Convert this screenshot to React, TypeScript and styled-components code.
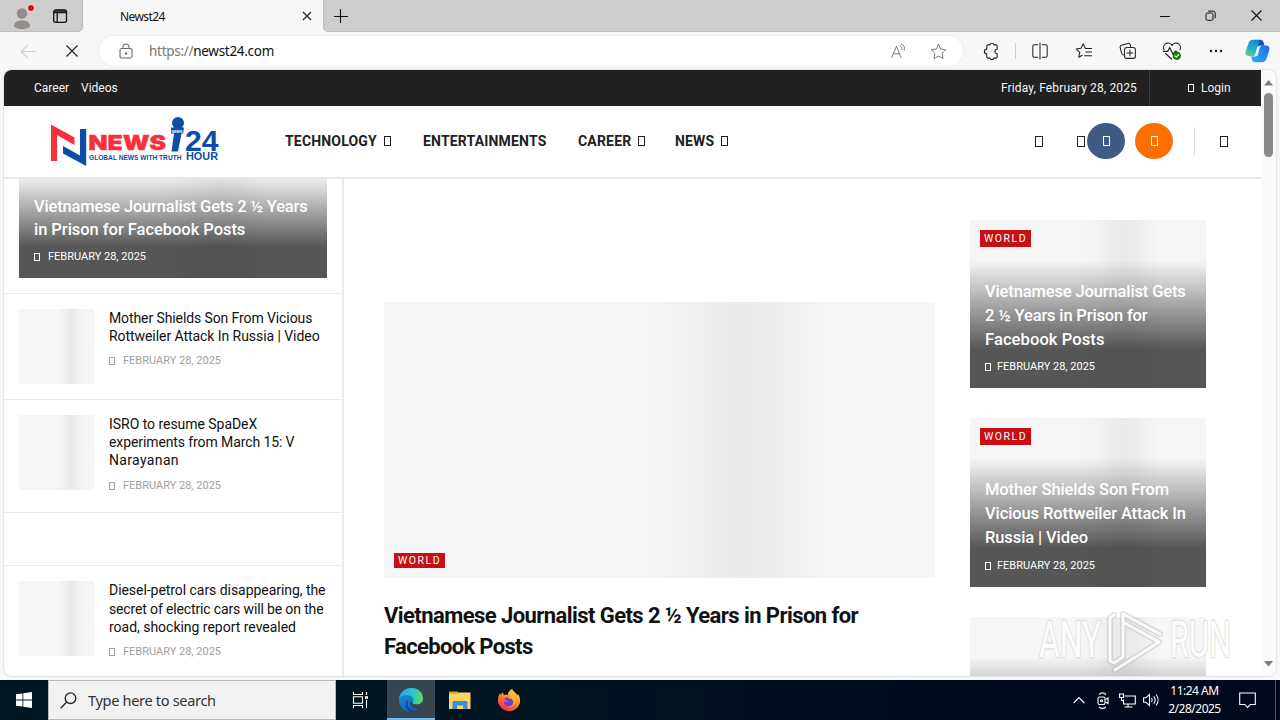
import type { ReactNode } from "react";
import styled, { createGlobalStyle } from "styled-components";

const posts = [
  {
    title: ["Mother Shields Son From Vicious", "Rottweiler Attack In Russia | Video"],
    spacing: [-0.1, -0.06],
  },
  {
    title: ["ISRO to resume SpaDeX", "experiments from March 15: V", "Narayanan"],
    spacing: [-0.04, -0.1, 0.35],
  },
];

const dieselPost = {
  title: [
    "Diesel-petrol cars disappearing, the",
    "secret of electric cars will be on the",
    "road, shocking report revealed",
  ],
  spacing: [-0.05, -0.14, -0.02],
};

const cards = [
  {
    title: ["Vietnamese Journalist Gets", "2 ½ Years in Prison for", "Facebook Posts"],
    spacing: [-0.13, -0.16, 0.1],
  },
  {
    title: ["Mother Shields Son From", "Vicious Rottweiler Attack In", "Russia | Video"],
    spacing: [-0.1, -0.1, -0.1],
  },
];

const menu = [
  { name: "TECHNOLOGY", width: 138, sub: true },
  { name: "ENTERTAINMENTS", width: 155, sub: false },
  { name: "CAREER", width: 97, sub: true },
  { name: "NEWS", width: 60, sub: true },
];

const Icon = ({ size = 20, children }: { size?: number; children: ReactNode }) => (
  <IconSvg
    width={size}
    height={size}
    viewBox="0 0 20 20"
    fill="none"
    stroke="currentColor"
    strokeWidth="1.15"
    strokeLinecap="round"
    strokeLinejoin="round"
  >
    {children}
  </IconSvg>
);

const TabBar = () => (
  <TabStrip>
    <TabActions>
      <svg width="28" height="28" viewBox="0 0 28 28">
        <circle cx="14" cy="14" r="12" fill="#d0cdcb" />
        <circle cx="14" cy="11.5" r="5.2" fill="#918f8d" />
        <path d="M6 24.5c0-4 3-6 8-6s8 2 8 6c-2 2-5 2.5-8 2.5s-6-.5-8-2.5z" fill="#918f8d" />
        <circle cx="23" cy="6" r="4.2" fill="#e6d8d8" />
        <circle cx="23" cy="6" r="3" fill="#e00b1c" />
      </svg>
      <svg width="16" height="16" viewBox="0 0 16 16" fill="none" stroke="#111" strokeWidth="1.3">
        <rect x="1.7" y="2" width="12.8" height="12.3" rx="2" />
        <path d="M2 3.2h12.3M2 4.6h12.3M5.2 5v9" />
      </svg>
    </TabActions>
    <ActiveTab>
      <span>Newst24</span>
      <svg width="10" height="10" viewBox="0 0 10 10" stroke="#222" strokeWidth="1.2">
        <path d="M1 1l8 8M9 1l-8 8" />
      </svg>
    </ActiveTab>
    <TabRest>
      <svg width="14" height="14" viewBox="0 0 14 14" stroke="#111" strokeWidth="1.1">
        <path d="M6.5 0v14M0 7.5h14" />
      </svg>
      <WindowButtons>
        <svg width="10" height="10" stroke="#111">
          <path d="M0 5.5h10" />
        </svg>
        <svg width="11" height="11" fill="none" stroke="#111">
          <rect x="1" y="3" width="7" height="7.3" rx="1.4" />
          <path d="M3 1.1h5.2a2 2 0 0 1 2 2v5.2" />
        </svg>
        <svg width="11" height="11" stroke="#111" strokeWidth="1.1">
          <path d="M.5.5l10 10M10.5.5l-10 10" />
        </svg>
      </WindowButtons>
    </TabRest>
  </TabStrip>
);

const AddressBar = () => (
  <Toolbar>
    <Slot $width={56} $color="#cfcfcf">
      <Icon size={19}>
        <path d="M17.5 10H2.5M9 3.5L2.5 10 9 16.5" />
      </Icon>
    </Slot>
    <Slot $width={32}>
      <svg width="12" height="12" stroke="#222" strokeWidth="1.2">
        <path d="M.5.5l11 11M11.5.5l-11 11" />
      </svg>
    </Slot>
    <AddressPill>
      <Slot $width={17} $color="#6b6b6b">
        <svg width="14" height="17" viewBox="0 0 14 17" fill="none" stroke="currentColor" strokeWidth="1.1">
          <rect x="1" y="5.5" width="12" height="9.5" rx="1.6" />
          <path d="M4 5.500V4a3 3 0 0 1 6 0v1.500" />
          <circle cx="7" cy="10.4" r=".7" fill="currentColor" />
        </svg>
      </Slot>
      <Url>
        <i>https://</i>newst24.com
      </Url>
      <Slot $width={40} $color="#777">
        <Icon size={17}>
          <path d="M2 17L7.6 4 13 17M4 12.7h7.2M12 3.4c1.6 1 2.2 2.6 2 4.4M13.3.8c3.2 1.6 4.3 4.6 3.6 7.6" />
        </Icon>
      </Slot>
      <Slot $width={40} $color="#777">
        <Icon size={17}>
          <path d="M10 1.5l2.6 5.6 6 .8-4.4 4.2 1.1 6.2L10 15.3l-5.3 3 1.1-6.2L1.4 7.9l6-.8z" />
        </Icon>
      </Slot>
    </AddressPill>
    <Slot $width={56}>
      <Icon size={19}>
        <path d="M7 3h1.3a2.2 2.2 0 0 1 4.3 0H14.5A1.5 1.5 0 0 1 16 4.5V7.6a2.4 2.4 0 0 0 0 4.8v3.1a1.5 1.5 0 0 1-1.5 1.5h-2a2.2 2.2 0 0 1-4.2 0H6.5A1.5 1.5 0 0 1 5 15.5v-3a2.3 2.3 0 0 1 0-5v-3A1.5 1.5 0 0 1 6.5 3z" />
      </Icon>
    </Slot>
    <Separator />
    <Slot $width={44}>
      <Icon size={18}>
        <path d="M7.5 3H3.7A1.7 1.7 0 0 0 2 4.7v10.6A1.7 1.7 0 0 0 3.7 17h3.8M12.5 3h3.8A1.7 1.7 0 0 1 18 4.7v10.6a1.7 1.7 0 0 1-1.7 1.7h-3.8M10 1v18" />
      </Icon>
    </Slot>
    <Slot $width={44}>
      <Icon size={18}>
        <path d="M11.5 7L9.1 1.9 6.7 7l-5.5.7 4.1 3.7L4.2 17 8 14.8M11.5 7.2h7M12 11.2h6.5M10.5 15.2h8" />
      </Icon>
    </Slot>
    <Slot $width={44}>
      <Icon size={18}>
        <path d="M5 14.5A4 4 0 0 1 2.8 12L1.3 6.2a2 2 0 0 1 1.4-2.5L10 1.6a2 2 0 0 1 2.5 1.4l.5 2" />
        <rect x="6.2" y="6.2" width="12" height="12" rx="2.4" />
        <path d="M12.2 9v6.4M9 12.2h6.4" />
      </Icon>
    </Slot>
    <Slot $width={44}>
      <Icon size={20}>
        <path d="M2 8.5a4.3 4.3 0 0 1 8-4 4.3 4.3 0 0 1 8 4M3.5 12.5l6 5.5M1.3 10.4h4.4l2-4 3.4 7 2-3h1.5" />
        <circle cx="14.8" cy="14.8" r="4.1" fill="#107c10" stroke="none" />
        <path d="M13 14.9l1.3 1.3 2.5-2.7" stroke="#fff" />
      </Icon>
    </Slot>
    <Slot $width={44}>
      <svg width="14" height="4" fill="#222">
        <circle cx="2" cy="2" r="1.25" />
        <circle cx="7" cy="2" r="1.25" />
        <circle cx="12" cy="2" r="1.25" />
      </svg>
    </Slot>
    <Slot $width={39}>
      <Copilot />
    </Slot>
  </Toolbar>
);

const Copilot = () => (
  <svg width="25" height="24" viewBox="0 0 25 24">
    <defs>
      <linearGradient id="cpA" x1="0" y1="1" x2=".5" y2="0">
        <stop offset="0" stopColor="#7bd36a" />
        <stop offset=".45" stopColor="#22b3c9" />
        <stop offset="1" stopColor="#1588dd" />
      </linearGradient>
      <linearGradient id="cpB" x1="0" y1="1" x2="1" y2="0">
        <stop offset="0" stopColor="#29b6f2" />
        <stop offset="1" stopColor="#2563e8" />
      </linearGradient>
    </defs>
    <path
      d="M8 .8h7.5c2 0 2.6 1.5 3.1 3l.7 2.5h-3.6c-1.8 0-2.8 1-3.3 2.6l-1.6 5.6c-.5 1.7-1.6 2.7-3.3 2.7H4.2c-2.8 0-4.2-1.8-3.5-4.7L3.5 4.3C4.2 2 5.7.8 8 .8z"
      fill="url(#cpA)"
    />
    <path
      d="M17 23.2H10c-2 0-2.8-1.4-3.2-3l-.6-2.7h3.4c1.8 0 2.9-1 3.4-2.6l1.6-5.6c.5-1.7 1.5-2.9 3.3-2.9h2.9c2.8 0 4.2 1.9 3.5 4.8l-2.8 8.5c-.7 2.3-2.2 3.5-4.5 3.5z"
      fill="url(#cpB)"
    />
    <path d="M18.6 3.8l.8 2.6h-3.7c-1.3 0-2.2.6-2.8 1.6L14.5 1h1c2 0 2.6 1.3 3.1 2.8z" fill="#1751b8" />
    <path d="M14.8 7.5l-2.6 9h-2.4l2.6-9z" fill="#eef6ff" />
  </svg>
);

const Logo = () => (
  <svg width="172" height="54" viewBox="0 0 172 54" fontFamily="Liberation Sans" fontWeight="700">
    <path d="M1 10.5l23.5 13V31L7 21v26H1z" fill="#f9303a" />
    <path d="M36.200 15v37L13 39.500V32L30 41.500V15z" fill="#0c4da8" />
    <text
      x="38.5"
      y="36.3"
      textLength="77.5"
      lengthAdjust="spacingAndGlyphs"
      fontFamily="Inter"
      fontWeight="900"
      fontSize="20.5"
      fill="#f9303a"
      stroke="#f9303a"
      strokeWidth=".4"
    >
      NEWS
    </text>
    <text x="39" y="46" textLength="92.5" lengthAdjust="spacingAndGlyphs" fontSize="6.4" fill="#0c4da8">
      GLOBAL NEWS WITH TRUTH
    </text>
    <circle cx="128" cy="9" r="6" fill="#0c4da8" />
    <path d="M121 13.5h13l-.8 6h-1.7L128 37.5h-6.5L124 19.5h-3z" fill="#0c4da8" />
    <text x="121.5" y="18.6" textLength="11" lengthAdjust="spacingAndGlyphs" fontSize="4" fill="#fff">
      NEWS
    </text>
    <text x="135" y="36.5" textLength="33.5" lengthAdjust="spacingAndGlyphs" fontSize="30" fill="#0c4da8">
      24
    </text>
    <text x="136" y="46" textLength="32" lengthAdjust="spacingAndGlyphs" fontSize="10.5" fill="#0c4da8">
      HOUR
    </text>
  </svg>
);

const PostItem = ({ title, spacing }: { title: string[]; spacing: number[] }) => (
  <PostRow>
    <Thumb />
    <div>
      <PostTitle>
        {title.map((line, i) => (
          <Line key={line} $spacing={spacing[i]}>
            {line}
          </Line>
        ))}
      </PostTitle>
      <PostDate>
        <Tofu $w={6} $h={8} />
        FEBRUARY 28, 2025
      </PostDate>
    </div>
  </PostRow>
);

const Watermark = () => (
  <WatermarkSvg width="204" height="76" viewBox="0 0 204 76">
    <g
      strokeLinejoin="round"
      fontFamily="Roboto"
      fontSize="50"
      fill="#fff"
      fillOpacity=".9"
      stroke="#dcdcdc"
      strokeOpacity=".75"
      strokeWidth="3"
      paintOrder="stroke"
    >
      <text x="5" y="53" textLength="62" lengthAdjust="spacingAndGlyphs">
        ANY
      </text>
      <text x="136" y="53" textLength="61" lengthAdjust="spacingAndGlyphs">
        RUN
      </text>
    </g>
    <g fill="none" strokeLinejoin="round" strokeLinecap="round">
      <path
        d="M89 53V10l37 20M89 18l36 20-44 28M80 11l-4 3v43l4 2 9-6"
        stroke="#aaa"
        strokeOpacity=".35"
        strokeWidth="6"
      />
      <path
        d="M89 53V10l37 20M89 18l36 20-44 28M80 11l-4 3v43l4 2 9-6"
        stroke="#fff"
        strokeOpacity=".85"
        strokeWidth="3"
      />
    </g>
  </WatermarkSvg>
);

const EdgeIcon = () => (
  <svg width="26" height="26" viewBox="0 0 26 26">
    <defs>
      <linearGradient id="edA" x1="0" y1=".4" x2="1" y2=".5">
        <stop offset="0" stopColor="#2aa7e8" />
        <stop offset=".6" stopColor="#2fc5c4" />
        <stop offset="1" stopColor="#62d957" />
      </linearGradient>
      <linearGradient id="edB" x1="0" y1="0" x2=".4" y2="1">
        <stop offset="0" stopColor="#1c9be0" />
        <stop offset="1" stopColor="#1463bd" />
      </linearGradient>
    </defs>
    <circle cx="13" cy="13" r="12" fill="url(#edB)" />
    <path
      d="M1.2 11.5C2.5 4.5 8 1 13.5 1 20.5 1 25 6 25 11c0 4-3 6.5-6.6 6.5-3.2 0-4.4-1.2-4-2 .8-1 1.2-2 .9-3.2C14.7 9.5 11.5 8 8.5 8c-3.3 0-6 1.4-7.3 3.5z"
      fill="url(#edA)"
    />
    <path d="M10 12.5c-2 5 1.3 10.8 7 10.8 2.5 0 4.5-.6 6-1.7-2.3 2.6-6 3.9-10 3.4C7 23.5 5.8 16 10 12.5z" fill="#124a9b" />
    <path
      d="M14.4 15.5c-.4.8.8 2 4 2 2.4 0 5-1 6.5-2.3l2 3-4 2.800c-1.2.9-2.5 1.2-4 1.2-4.5 0-7.9-3.7-6.4-7.2.9-.9 2.9.7 1.9.5z"
      fill="#36474f"
    />
  </svg>
);

const FirefoxIcon = () => (
  <svg width="24" height="25" viewBox="0 0 24 25">
    <defs>
      <linearGradient id="ffA" x1=".8" y1="0" x2=".2" y2="1">
        <stop offset="0" stopColor="#ffe14a" />
        <stop offset=".45" stopColor="#ff8a1e" />
        <stop offset="1" stopColor="#f5215c" />
      </linearGradient>
    </defs>
    <path
      d="M15 1c1 2 3 3 4.5 5l1 1.5.5-1.5c2 3 2.5 6 1.8 9.5A11.3 11.3 0 0 1 1 14C.7 10 1.5 7 3 5l.8 2L5.5 4l1.500 3c2-.5 3 0 4 0-.5-2.500 2-5 4-6z"
      fill="url(#ffA)"
    />
    <path
      d="M7.5 10c3-1.5 5 .5 5.5 1 2.5-1 4 .5 4.5 2.5 0 3.5-3 5-5.5 5s-5.5-2-5-5.5c1 1 2.5 1.5 4 .5C9.5 13 7.5 12 7.5 10z"
      fill="#7540cf"
    />
    <path d="M13 6c3 1 6 4 5.5 8-.7 4-5 5.5-7.5 4.5 4 .2 6.5-3 5-6-1-2-3.5-3-3-6.5z" fill="#ffb52c" />
  </svg>
);

const Taskbar = () => (
  <TaskbarRow>
    <TaskSlot $width={48}>
      <svg width="16" height="16" fill="#fff">
        <path d="M0 2.3L6.5 1.4v6.2H0zM7.3 1.3L16 0v7.6H7.3zM0 8.4h6.5v6.2L0 13.7zM7.3 8.4H16V16l-8.7-1.3z" />
      </svg>
    </TaskSlot>
    <SearchBox>
      <svg width="17" height="17" fill="none" stroke="#222" strokeWidth="1.3">
        <circle cx="10.5" cy="6.2" r="5.3" />
        <path d="M6.7 10L.7 16.2" />
      </svg>
      <span>Type here to search</span>
    </SearchBox>
    <TaskSlot $width={49}>
      <svg width="17" height="16" fill="none" stroke="#fff" strokeWidth="1.1">
        <path d="M1.5 0v2.5h9V0M1.5 16v-2.5h9V16M1.5 4.7h9v6.6h-9zM14.5 0v3M14.5 8v8" />
        <path d="M13 4.2h3v2.6h-3z" fill="#fff" stroke="none" />
      </svg>
    </TaskSlot>
    <TaskGap />
    <TaskSlot $width={48} $active>
      <EdgeIcon />
    </TaskSlot>
    <TaskSlot $width={50}>
      <svg width="22" height="20" viewBox="0 0 22 20">
        <path d="M0 1.5h8l2 2H0z" fill="#e29c1b" />
        <path d="M0 2.5h21.5V19H0z" fill="#fbd466" />
        <path d="M0 2h7.5l1.5 2H0z" fill="#efa51f" />
        <path
          d="M3.5 19v-6.5a1.5 1.5 0 0 1 1.5-1.5h12a1.5 1.5 0 0 1 1.5 1.5V19h-4.3v-3.5H8V19z"
          fill="#3b8fd0"
        />
      </svg>
    </TaskSlot>
    <TaskSlot $width={48}>
      <FirefoxIcon />
    </TaskSlot>
    <Tray>
      <TaskSlot $width={25}>
        <svg width="12" height="8" fill="none" stroke="#fff" strokeWidth="1.2">
          <path d="M.7 7L6 1.5 11.3 7" />
        </svg>
      </TaskSlot>
      <TaskSlot $width={24}>
        <svg width="12" height="17" fill="none" stroke="#fff" strokeWidth="1.1">
          <rect x="1" y="5" width="7" height="7.5" rx="1.5" />
          <path d="M8.5 7.5L11 6v5.500L8.500 10M2 2.500C4 .7 7 .7 9 2.500M2 15c2 1.600 5 1.600 7 0" />
          <circle cx="4.5" cy="8.8" r="1" />
        </svg>
      </TaskSlot>
      <TaskSlot $width={24}>
        <svg width="17" height="15" fill="none" stroke="#fff" strokeWidth="1.1">
          <path d="M5.5 3h10.8v8H4.5V6.5M9 11v3M5.5 14h8" />
          <path d="M.5 1h4v3.5h-4zM2.5 4.5v3h2" />
        </svg>
      </TaskSlot>
      <TaskSlot $width={24}>
        <svg width="17" height="14" fill="none" stroke="#fff" strokeWidth="1.1">
          <path d="M.6 4.8h2.2L6.5 1.5v11L2.8 9.2H.6zM8.5 5c.9 1.2.9 2.8 0 4M10.7 3.3c1.8 2.2 1.8 5.2 0 7.4M13 1.5c2.8 3.3 2.8 7.7 0 11" />
        </svg>
      </TaskSlot>
      <Clock>
        <span>11:24 AM</span>
        <span>2/28/2025</span>
      </Clock>
      <TaskSlot $width={43}>
        <svg width="17" height="17" fill="none" stroke="#fff" strokeWidth="1.1">
          <path d="M.7 1h15.6v11.5h-5L8.5 15.500l-2.700-3H.7z" />
        </svg>
      </TaskSlot>
      <ShowDesktop />
    </Tray>
  </TaskbarRow>
);

const App = () => {
  return (
    <Screen>
      <GlobalStyle />
      <TabBar />
      <AddressBar />
      <Viewport>
        <Site>
          <TopBar>
            <TopLink $width={47}>Career</TopLink>
            <TopLink>Videos</TopLink>
            <Today>Friday, February 28, 2025</Today>
            <Login>
              <Tofu $w={6} $h={8} />
              Login
            </Login>
          </TopBar>
          <Header>
            <LogoBox>
              <Logo />
            </LogoBox>
            {menu.map((item) => (
              <MenuItem key={item.name} $width={item.width}>
                {item.name}
                {item.sub && <Tofu $w={7} $h={10} />}
              </MenuItem>
            ))}
            <HeaderActions>
              <Tofu $w={8} $h={11} />
              <Tofu $w={8} $h={11} />
              <RoundButton $bg="#3f5a85">
                <Tofu $w={7} $h={10} />
              </RoundButton>
              <RoundButton $bg="#ff6f00">
                <Tofu $w={7} $h={10} />
              </RoundButton>
              <HeaderDivider />
              <Tofu $w={8} $h={11} />
            </HeaderActions>
          </Header>
          <Columns>
            <Sidebar>
              <LeadCard>
                <Overlay>
                  <CardTitle>
                    <Line $spacing={-0.18}>Vietnamese Journalist Gets 2 ½ Years</Line>
                    <Line $spacing={-0.04}>in Prison for Facebook Posts</Line>
                  </CardTitle>
                  <CardDate $gap={8}>
                    <Tofu $w={6} $h={8} />
                    FEBRUARY 28, 2025
                  </CardDate>
                </Overlay>
              </LeadCard>
              {posts.map((post) => (
                <PostItem key={post.title[0]} {...post} />
              ))}
              <EmptyRow />
              <PostItem {...dieselPost} />
            </Sidebar>
            <Main>
              <Hero>
                <Badge $small>WORLD</Badge>
              </Hero>
              <Headline>
                <Line $spacing={-0.57}>Vietnamese Journalist Gets 2 ½ Years in Prison for</Line>
                <Line $spacing={-0.66}>Facebook Posts</Line>
              </Headline>
            </Main>
            <Aside>
              {cards.map((card) => (
                <Card key={card.title[0]}>
                  <Badge>WORLD</Badge>
                  <Overlay>
                    <CardTitle>
                      {card.title.map((line, i) => (
                        <Line key={line} $spacing={card.spacing[i]}>
                          {line}
                        </Line>
                      ))}
                    </CardTitle>
                    <CardDate $gap={6}>
                      <Tofu $w={6} $h={8} />
                      FEBRUARY 28, 2025
                    </CardDate>
                  </Overlay>
                </Card>
              ))}
              <Card>
                <Overlay $blank />
              </Card>
            </Aside>
          </Columns>
        </Site>
        <Scrollbar>
          <svg width="9" height="6" fill="#7d7d7d">
            <path d="M0 5.5L4.5 0 9 5.5z" />
          </svg>
          <ScrollThumb />
          <svg width="9" height="6" fill="#7d7d7d">
            <path d="M0 0h9L4.5 5.5z" />
          </svg>
        </Scrollbar>
      </Viewport>
      <Taskbar />
      <Watermark />
    </Screen>
  );
};

export default App;

const GlobalStyle = createGlobalStyle`
  * {
    box-sizing: border-box;
  }
  body {
    margin: 0;
    overflow: hidden;
  }
  svg {
    display: block;
    flex-shrink: 0;
  }
`;

const Screen = styled.div`
  position: relative;
  width: 1280px;
  height: 720px;
  display: flex;
  flex-direction: column;
  overflow: hidden;
  background-color: #f7f7f7;
  font-family: Roboto, sans-serif;
`;

const IconSvg = styled.svg`
  display: block;
`;

const TabStrip = styled.div`
  height: 32px;
  display: flex;
  background-color: #f7f7f7;
  font-family: "Noto Sans", sans-serif;
`;

const TabActions = styled.div`
  width: 83px;
  padding-left: 8px;
  display: flex;
  align-items: center;
  gap: 16px;
  background-color: #cdcdcd;
  border-right: 1px solid #bdbdbd;
  border-bottom: 1px solid #bdbdbd;
  border-bottom-right-radius: 5px;
`;

const ActiveTab = styled.div`
  width: 240px;
  padding: 0 11px 0 37px;
  display: flex;
  align-items: center;
  justify-content: space-between;

  span {
    font-size: 12px;
    letter-spacing: -0.6px;
    color: #111111;
  }
`;

const TabRest = styled.div`
  flex: 1;
  padding-left: 10px;
  display: flex;
  align-items: center;
  justify-content: space-between;
  background-color: #cdcdcd;
  border-left: 1px solid #bdbdbd;
  border-bottom: 1px solid #bdbdbd;
  border-bottom-left-radius: 5px;
`;

const WindowButtons = styled.div`
  width: 138px;
  display: flex;
  align-items: center;
  justify-content: space-around;
`;

const Toolbar = styled.div`
  height: 38px;
  display: flex;
  align-items: center;
  background-color: #f7f7f7;
`;

const Slot = styled.div<{ $width: number; $color?: string }>`
  width: ${({ $width }) => $width}px;
  flex-shrink: 0;
  display: flex;
  align-items: center;
  justify-content: center;
  color: ${({ $color }) => $color ?? "#222222"};
`;

const AddressPill = styled.div`
  width: 864px;
  height: 30px;
  margin-left: 11px;
  padding: 0 5px 0 18px;
  display: flex;
  align-items: center;
  border-radius: 15px;
  background-color: #ffffff;
  box-shadow: 0 0 2px #dddddd;
`;

const Url = styled.div`
  flex: 1;
  padding-left: 15px;
  font-family: "Noto Sans", sans-serif;
  font-size: 13.5px;
  letter-spacing: -0.29px;
  color: #111111;

  i {
    font-style: normal;
    color: #777777;
  }
`;

const Separator = styled.div`
  width: 1px;
  height: 16px;
  margin: 0 2px 0 -4px;
  background-color: #cfcfcf;
`;

const Viewport = styled.div`
  height: 606px;
  margin: 0 4px 4px;
  display: flex;
  overflow: hidden;
  border-radius: 8px;
  background-color: #ffffff;
  box-shadow: 0 0 2px #b5b5b5;
`;

const Site = styled.div`
  width: 1257px;
  display: flex;
  flex-direction: column;
`;

const TopBar = styled.div`
  height: 36px;
  flex-shrink: 0;
  padding-left: 30px;
  display: flex;
  align-items: center;
  background-color: #212121;
  color: #f5f5f5;
  font-size: 12px;
`;

const TopLink = styled.span<{ $width?: number }>`
  width: ${({ $width }) => ($width ? `${$width}px` : "auto")};
`;

const Today = styled.span`
  margin-left: auto;
  padding-right: 12px;
  letter-spacing: 0.14px;
`;

const Login = styled.div`
  height: 100%;
  width: 112px;
  padding-left: 38px;
  display: flex;
  align-items: center;
  gap: 7px;
  border-left: 1px solid #3c3c3c;
`;

const Tofu = styled.span<{ $w: number; $h: number }>`
  display: inline-block;
  flex-shrink: 0;
  width: ${({ $w }) => $w}px;
  height: ${({ $h }) => $h}px;
  border: 1px solid currentColor;
`;

const Header = styled.div`
  height: 73px;
  flex-shrink: 0;
  padding-bottom: 1px;
  display: flex;
  align-items: center;
  border-bottom: 2px solid #e8e8e8;
  color: #212121;
`;

const LogoBox = styled.div`
  width: 281px;
  padding-left: 46px;
`;

const MenuItem = styled.div<{ $width: number }>`
  width: ${({ $width }) => $width}px;
  display: flex;
  align-items: center;
  gap: 7px;
  font-size: 14px;
  font-weight: 700;
  letter-spacing: 0.18px;
`;

const HeaderActions = styled.div`
  margin-left: auto;
  padding-right: 33px;
  display: flex;
  align-items: center;

  > span:nth-child(2) {
    margin: 0 1px 0 34px;
  }
`;

const RoundButton = styled.div<{ $bg: string }>`
  width: 38px;
  height: 36px;
  margin: 0 9px 0 1px;
  display: flex;
  align-items: center;
  justify-content: center;
  border-radius: 50%;
  background-color: ${({ $bg }) => $bg};
  color: #ffffff;
`;

const HeaderDivider = styled.div`
  width: 1px;
  height: 29px;
  margin: 0 25px 0 12px;
  background-color: #dddddd;
`;

const Columns = styled.div`
  flex: 1;
  min-height: 0;
  display: flex;
  overflow: hidden;
`;

const Sidebar = styled.div`
  width: 340px;
  flex-shrink: 0;
  border-right: 2px solid #ebebeb;
`;

const shimmer = `linear-gradient(
  to right,
  #f6f6f6 46%,
  #f2f2f2 54%,
  #ececec 61%,
  #eaeaea 65%,
  #ececec 70%,
  #f1f1f1 75%,
  #f6f6f6 81%
)`;

const CardTitle = styled.div`
  font-size: 16.5px;
  font-weight: 500;
  line-height: 23.7px;
`;

const Overlay = styled.div<{ $blank?: boolean }>`
  width: 100%;
  height: ${({ $blank }) => ($blank ? "128px" : "auto")};
  flex-shrink: 0;
  padding: 20px 15px 14px;
  background: linear-gradient(to bottom, rgba(0, 0, 0, 0), rgba(0, 0, 0, 0.65) 70%);
  color: #ffffff;
`;

const LeadCard = styled.div`
  height: 99px;
  margin: 0 15px 15px;
  display: flex;
  align-items: flex-end;
  overflow: hidden;
  background: ${shimmer};

  ${CardTitle} {
    line-height: 23px;
  }
`;

const Line = styled.span<{ $spacing: number }>`
  display: block;
  white-space: nowrap;
  letter-spacing: ${({ $spacing }) => $spacing}px;
`;

const CardDate = styled.div<{ $gap: number }>`
  margin-top: 9px;
  display: flex;
  align-items: center;
  gap: ${({ $gap }) => $gap}px;
  font-size: 11px;
  line-height: 14px;
`;

const PostRow = styled.div`
  padding: 15px;
  display: flex;
  gap: 15px;
  border-top: 1px solid #eaeaea;
`;

const Thumb = styled.div`
  width: 75px;
  height: 75px;
  flex-shrink: 0;
  background: linear-gradient(to right, #f6f6f6 50%, #f0f0f0 60%, #e9e9e9 70%, #f0f0f0 80%, #f6f6f6 92%);
`;

const PostTitle = styled.div`
  font-size: 14px;
  line-height: 18.2px;
  color: #111111;
`;

const PostDate = styled.div`
  height: 19.4px;
  margin-top: 8px;
  display: flex;
  gap: 8px;
  align-items: flex-start;
  font-size: 11px;
  line-height: 16px;
  color: #a0a0a0;

  span {
    margin-top: 4px;
  }
`;

const EmptyRow = styled.div`
  height: 53.4px;
  border-top: 1px solid #eaeaea;
`;

const Main = styled.div`
  width: 551px;
  margin-left: 40px;
  padding-top: 123px;
`;

const Hero = styled.div`
  height: 276px;
  padding: 0 0 10px 10px;
  display: flex;
  align-items: flex-end;
  background: ${shimmer};
`;

const Badge = styled.div<{ $small?: boolean }>`
  width: 51px;
  height: ${({ $small }) => ($small ? 15 : 17)}px;
  padding-left: 4px;
  display: flex;
  align-items: center;
  background-color: #c80f14;
  color: #ffffff;
  font-size: 10.5px;
  letter-spacing: 1.5px;
`;

const Headline = styled.div`
  margin-top: 22px;
  font-size: 22px;
  font-weight: 700;
  line-height: 31px;
  color: #111111;
`;

const Aside = styled.div`
  width: 236px;
  margin-left: 35px;
  padding-top: 41px;
  display: flex;
  flex-direction: column;
  gap: 30px;
`;

const Card = styled.div`
  height: 168.3px;
  flex-shrink: 0;
  display: flex;
  flex-direction: column;
  justify-content: space-between;
  background: ${shimmer};

  > ${Badge} {
    margin: 10px 0 0 10px;
  }
  > ${Overlay}:only-child {
    margin-top: auto;
  }
`;

const Scrollbar = styled.div`
  width: 15px;
  padding: 10px 0 9px;
  display: flex;
  flex-direction: column;
  align-items: center;
  background-color: #fafafa;

  svg:last-child {
    margin-top: auto;
  }
`;

const ScrollThumb = styled.div`
  width: 9px;
  height: 64px;
  margin-top: 7px;
  border-radius: 5px;
  background-color: #8a8a8a;
`;

const TaskbarRow = styled.div`
  height: 40px;
  display: flex;
  background: linear-gradient(to right, #001720, #001520 40%, #000a1c 80%);
`;

const TaskSlot = styled.div<{ $width: number; $active?: boolean }>`
  width: ${({ $width }) => $width}px;
  display: flex;
  align-items: center;
  justify-content: center;
  background-color: ${({ $active }) => ($active ? "#36474f" : "transparent")};
  box-shadow: ${({ $active }) => ($active ? "inset 0 -2px #76b9ed" : "none")};
`;

const TaskGap = styled.div`
  width: 2px;
`;

const SearchBox = styled.div`
  width: 288px;
  padding-left: 11px;
  display: flex;
  align-items: center;
  gap: 11px;
  border: 1px solid #b9b9b9;
  background-color: #f2f2f2;
  font-family: "Noto Sans", sans-serif;
  font-size: 14.5px;
  letter-spacing: -0.3px;
  color: #333333;
`;

const Tray = styled.div`
  margin-left: auto;
  padding-right: 4px;
  display: flex;
  color: #ffffff;
`;

const ShowDesktop = styled.div`
  width: 1px;
  margin-left: 6px;
  background-color: #4a5262;
`;

const Clock = styled.div`
  width: 63px;
  display: flex;
  flex-direction: column;
  align-items: center;
  justify-content: center;
  font-family: "Noto Sans", sans-serif;
  font-size: 12px;
  line-height: 18px;
  letter-spacing: -0.5px;
`;

const WatermarkSvg = styled.svg`
  position: absolute;
  left: 1034px;
  top: 604px;
`;
